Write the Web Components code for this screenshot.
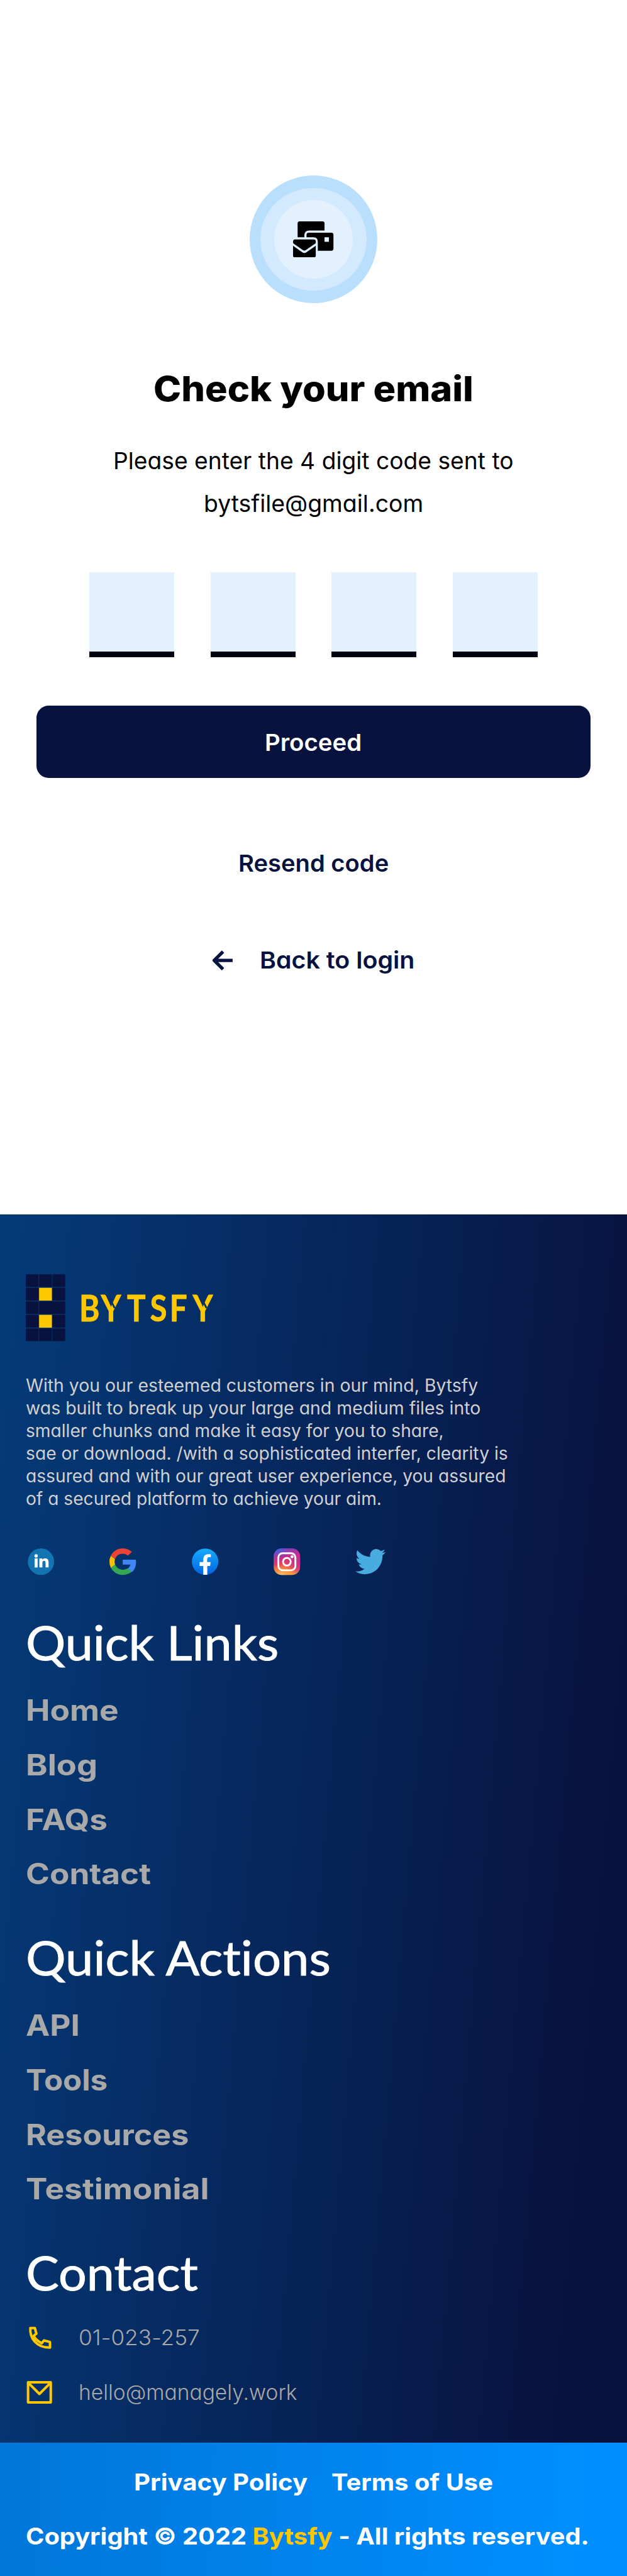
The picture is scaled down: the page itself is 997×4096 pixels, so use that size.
<!DOCTYPE html>
<html lang="en">
<head>
<meta charset="utf-8">
<title>Bytsfy – Check your email</title>
<style>
/* 1rem equals one hundred design pixels */
html{font-size:80.274px}
body{margin:0;background:#fff;font-family:Inter,"Liberation Sans",sans-serif;overflow-x:hidden}
</style>
</head>
<body>
<bytsfy-page></bytsfy-page>
<script>
function define(name, html, setup){
  const t=document.createElement('template'); t.innerHTML=html;
  customElements.define(name, class extends HTMLElement{
    constructor(){super();this.attachShadow({mode:'open'}).append(t.content.cloneNode(true));}
    connectedCallback(){ if(setup) setup.call(this,this.shadowRoot); }
  });
}

/* One line of text, widened so that it spans the width given in design pixels. */
define('fit-line', `<style>
:host{display:block;white-space:nowrap;font-variant-ligatures:none}
span{display:inline-block;transform-origin:0 50%}
</style><span><slot></slot></span>`, function(root){
  const s=root.querySelector('span'), want=+this.getAttribute('w')*.80274;
  const nat=s.getBoundingClientRect().width;
  s.style.transform='scaleX('+(want/nat)+')';
  this.style.width=want+'px';
});

define('mail-badge', `<style>
:host{display:grid;place-items:center;width:2.52rem;height:2.52rem;border-radius:50%;background:#badffd}
.mid{display:grid;place-items:center;width:2.1rem;height:2.04rem;border-radius:50%;background:#d2e9fe}
.in{display:grid;place-items:center;width:1.56rem;height:1.56rem;border-radius:50%;background:#e3f1ff}
svg{width:.8rem;height:.72rem}
</style><div class="mid"><div class="in"><svg viewBox="423 354 240 216">
<path d="M450 448V366q0-12 12-12H598q12 0 12 12V408H520q-30 0-30 30V448Z"/>
<path fill-rule="evenodd" d="M503 448V434q0-13 13-13H650q13 0 13 13V516q0 13-13 13H570V475q0-27-26-27ZM610 448V475H636V448Z"/>
<path d="M436 461H545q13 0 13 13V480q0 4-4 7L498 525q-8 6-16 0L427 487q-4-3-4-7V474q0-13 13-13Z"/>
<path d="M423 499L477 537q13 9 26 0L558 499V556q0 14-14 14H436q-13 0-13-13Z"/>
</svg></div></div>`);

define('code-input', `<style>
:host{display:flex;gap:.72rem}
i{width:1.68rem;height:1.56rem;background:#e3f1ff;border-bottom:.12rem solid #00020f}
</style><i></i><i></i><i></i><i></i>`);

define('primary-button', `<style>
:host{display:block;width:10.98rem}
button{all:unset;display:flex;justify-content:center;align-items:center;box-sizing:border-box;width:100%;height:1.44rem;padding-top:.03rem;border-radius:.24rem;background:#08123f;color:#fff;font-size:.465rem;font-weight:600}
</style><button><slot></slot></button>`);

define('verify-panel', `<style>
:host{display:flex;flex-direction:column;align-items:center;box-sizing:border-box;height:24.06rem;padding-top:3.48rem;color:#000;font-feature-settings:"cv11"}
h1{margin:1.26rem 0 0;font:800 .69rem/.88rem Inter,sans-serif;font-feature-settings:normal}
.p{margin-top:.57rem;font-size:.465rem;line-height:.84rem;display:flex;flex-direction:column;align-items:center}
code-input{margin:.95rem 0 .96rem}
.a{color:#08123f;font-weight:600;font-size:.465rem;line-height:.6rem;margin-top:1.39rem}
.b{margin-top:1.32rem;display:flex;align-items:center;gap:.53rem}
svg{width:.42rem;height:.4rem}
</style>
<mail-badge></mail-badge>
<h1><fit-line w="634">Check your email</fit-line></h1>
<div class="p"><fit-line w="793">Please enter the 4 digit code sent to</fit-line><fit-line w="435">bytsfile@gmail.com</fit-line></div>
<code-input></code-input>
<primary-button><fit-line w="192">Proceed</fit-line></primary-button>
<div class="a"><fit-line w="298">Resend code</fit-line></div>
<div class="a b"><svg viewBox="0 0 42 40" fill="none" stroke="#08123f" stroke-width="6.6" stroke-linejoin="round"><path d="M22 2.5L4.5 20L22 37.5M5 20H41"/></svg><fit-line w="307">Back to login</fit-line></div>`);

define('brand-logo', `<style>
:host{display:flex}
svg{width:3.75rem;height:1.33rem;overflow:visible}
text{font-family:Lato,sans-serif;font-weight:700;font-size:70.5px;fill:#ffc700;stroke:#ffc700;stroke-width:1}
</style><svg viewBox="51 2524 375 133">
<g fill="#08123f" id="g"></g>
<g fill="#ffc700"><rect x="77.4" y="2551" width="25.3" height="25.4"/><rect x="77.4" y="2604.6" width="25.3" height="25.4"/></g>
<text y="2617.3" transform="scale(.87 1)" x="180.5 229.9 289.1 341.4 386.2 439">BYTSFY</text>
<g stroke="#07306a" stroke-width="3.6"><path d="M217.500 2572L227 2591"/><path d="M399.500 2572L409 2591"/></g>
</svg>`, function(root){
  let h='';
  for(let r=0;r<5;r++)for(let c=0;c<3;c++){
    if(c===1&&(r===1||r===3)) continue;
    if(r===2&&c===2) continue;
    const w=(r===2&&c===1)?51.8:25.2;
    h+=`<rect x="${51+c*26.4}" y="${(2524.2+r*26.8).toFixed(1)}" width="${w}" height="25.3" rx="1"/>`;
  }
  root.getElementById('g').innerHTML=h;
});

define('social-row', `<style>
:host{display:flex;align-items:center;height:.53rem;margin-left:.037rem}
svg{width:.527rem;height:.527rem;margin-right:1.098rem;overflow:visible}
svg.tw{width:.6rem;height:.5rem;margin-left:-.01rem}
</style>
<svg viewBox="0 0 157 159"><ellipse cx="78.5" cy="79.5" rx="78.5" ry="79.5" fill="#1275b1"/><g fill="#fff"><circle cx="49.5" cy="45" r="10"/><rect x="40.500" y="60" width="18" height="54"/><path d="M69 60h17v8q6-9 18-9 20 0 20 25v30h-18V87q0-13-9-13-10 0-10 13v27H69Z"/></g></svg>
<svg viewBox="1 1 22 22"><path fill="#4285f4" d="M23 12.25c0-.5 0-.75-.12-1.95H12v4.1h6.3c-.15.95-.8 2.45-2.35 3.5l3.6 2.8C21.800 18.700 23 15.900 23 12.250z"/><path fill="#34a853" d="M12 23c3.100 0 5.600-1 7.500-2.700l-3.600-2.800c-1 .7-2.250 1.150-3.900 1.150-3 0-5.600-2-6.500-4.750L2 16.600C3.800 20.400 7.600 23 12 23z"/><path fill="#fbbc05" d="M5.600 14.200a6.700 6.700 0 010-4.350L2.200 7.050a11 11 0 000 9.900z"/><path fill="#eb4335" d="M12 5.400c2 0 3.400.8 4.300 1.600l3.250-3.100C17.600 2.100 15 1 12 1 7.700 1 4 3.400 2.200 7.050l3.500 2.750C6.500 7.200 9 5.400 12 5.400z"/></svg>
<svg viewBox="0 0 158 159"><defs><linearGradient id="f" x2="0" y2="1"><stop stop-color="#18acfe"/><stop offset="1" stop-color="#0163e0"/></linearGradient></defs><circle cx="79" cy="79.500" r="79" fill="url(#f)"/><path fill="#fff" d="M68 158V105H46V82H68V66q0-31 31-31H113V53H103q-12 0-12 13V82H112L109 105H92V158Z"/></svg>
<svg viewBox="0 0 158 159"><defs><linearGradient id="i" x1=".35" y1="0" x2=".5" y2="1"><stop stop-color="#7a3fc4"/><stop offset=".3" stop-color="#c22f92"/><stop offset=".58" stop-color="#e2415f"/><stop offset=".85" stop-color="#fb8133"/><stop offset="1" stop-color="#fda33a"/></linearGradient><radialGradient id="j" cx=".3" cy="1.05" r=".5"><stop stop-color="#e8dba0"/><stop offset=".25" stop-color="#f5b060" stop-opacity=".9"/><stop offset="1" stop-color="#ff8a2a" stop-opacity="0"/></radialGradient><radialGradient id="k" cx="1.05" cy=".5" r=".6"><stop stop-color="#c42d97"/><stop offset=".5" stop-color="#c42d97" stop-opacity=".7"/><stop offset="1" stop-color="#c42d97" stop-opacity="0"/></radialGradient><radialGradient id="l" cx=".15" cy="0" r=".45"><stop stop-color="#3a6bdf"/><stop offset="1" stop-color="#6b45c8" stop-opacity="0"/></radialGradient></defs><rect width="158" height="159" rx="48" fill="url(#i)"/><rect width="158" height="159" rx="48" fill="url(#k)"/><rect width="158" height="159" rx="48" fill="url(#j)"/><rect width="158" height="159" rx="48" fill="url(#l)"/><g fill="none" stroke="#fff" stroke-width="11"><rect x="28" y="29" width="102" height="102" rx="26"/><circle cx="79" cy="80" r="23"/></g><circle cx="110" cy="50" r="9" fill="#fff"/></svg>
<svg class="tw" viewBox="0 2.250 24 19.500" preserveAspectRatio="none"><path fill="#48ace0" d="M23.953 4.570a10 10 0 01-2.825.775 4.958 4.958 0 002.163-2.723c-.951.555-2.005.959-3.127 1.184a4.920 4.920 0 00-8.384 4.482C7.690 8.095 4.067 6.130 1.640 3.162a4.822 4.822 0 00-.666 2.475c0 1.710.870 3.213 2.188 4.096a4.904 4.904 0 01-2.228-.616v.060a4.923 4.923 0 003.946 4.827 4.996 4.996 0 01-2.212.085 4.936 4.936 0 004.604 3.417 9.867 9.867 0 01-6.102 2.105c-.390 0-.779-.023-1.170-.067a13.995 13.995 0 007.557 2.209c9.053 0 13.998-7.496 13.998-13.985 0-.210 0-.420-.015-.630A9.935 9.935 0 0024 4.590z"/></svg>`);

define('footer-group', `<style>
:host{display:block}
.h{font:400 .95rem/1.2rem Lato,sans-serif;color:#fff;-webkit-text-stroke:.012rem #fff;margin-bottom:var(--gap,.21rem)}
.l{font-weight:700;font-size:.575rem;line-height:1.08rem;color:#a9a9a9}
</style><div class="h"><slot name="title"></slot></div><div class="l"><slot></slot></div>`);

define('contact-row', `<style>
:host{display:flex;align-items:center;gap:.53rem;height:1.08rem;font-weight:300;font-size:.415rem;line-height:1.08rem;color:#a9a9a9;font-feature-settings:"cv11"}
::slotted(svg){width:.52rem;height:.5rem;flex:none}
</style><slot name="icon"></slot><slot></slot>`);

define('site-footer', `<style>
:host{display:block;box-sizing:border-box;height:24.32rem;padding:1.18rem 0 0 .51rem;background:linear-gradient(95deg,#053b78,#08123f 91%)}
.about{margin:.646rem 0 .754rem;font-size:.348rem;line-height:.45rem;color:#d0d0d0;font-feature-settings:"cv11"}
footer-group{margin-top:.51rem}
social-row+footer-group{margin-top:.73rem}
.c{--gap:.16rem}
</style>
<brand-logo></brand-logo>
<div class="about"><fit-line w="896">With you our esteemed customers in our mind, Bytsfy</fit-line><fit-line w="901">was built to break up your large and medium files into</fit-line><fit-line w="828">smaller chunks and make it easy for you to share,</fit-line><fit-line w="955">sae or download. /with a sophisticated interfer, clearity is</fit-line><fit-line w="951">assured and with our great user experience, you assured</fit-line><fit-line w="705">of a secured platform to achieve your aim.</fit-line></div>
<social-row></social-row>
<footer-group><fit-line slot="title" w="501">Quick Links</fit-line><fit-line w="184">Home</fit-line><fit-line w="142">Blog</fit-line><fit-line w="162">FAQs</fit-line><fit-line w="248">Contact</fit-line></footer-group>
<footer-group><fit-line slot="title" w="604">Quick Actions</fit-line><fit-line w="107">API</fit-line><fit-line w="162">Tools</fit-line><fit-line w="323">Resources</fit-line><fit-line w="363">Testimonial</fit-line></footer-group>
<footer-group class="c"><fit-line slot="title" w="341">Contact</fit-line>
<contact-row><svg slot="icon" viewBox="-5 -2 52 50" fill="none" stroke="#ffc700" stroke-width="5" stroke-linejoin="round"><path d="M4 4H13L16 15L10.500 19.500Q15 28 26.500 34L31 28.500L43 31.500V42.500Q24 43 13 31Q3 20 4 4Z"/></svg><fit-line w="240">01-023-257</fit-line></contact-row>
<contact-row><svg slot="icon" viewBox="-5 -2 52 50" fill="none" stroke="#ffc700" stroke-width="5" stroke-linejoin="round"><path d="M2.500 3.500H47.500V43.500H2.500ZM3 4.500L25 26.500L47 4.500" transform="translate(-3 -.5)"/></svg><fit-line w="433">hello@managely.work</fit-line></contact-row>
</footer-group>`);

define('legal-bar', `<style>
:host{display:block;box-sizing:border-box;height:2.65rem;padding-top:.25rem;background:linear-gradient(93deg,#0076d9,#008fff 95%);color:#fff;font-weight:700;font-size:.46rem;line-height:1.08rem}
.r{display:flex;justify-content:center;gap:.48rem}
.c{display:flex;padding-left:.51rem}
b{color:#ffc700;font-weight:inherit}
</style><div class="r"><fit-line w="344">Privacy Policy</fit-line><fit-line w="320">Terms of Use</fit-line></div>
<div class="c"><fit-line w="1116">Copyright © 2022 <b>Bytsfy</b> - All rights reserved.</fit-line></div>`);

define('bytsfy-page', `<style>:host{display:block;height:51.03rem;overflow:hidden}</style>
<verify-panel></verify-panel><site-footer></site-footer><legal-bar></legal-bar>`);
</script>
</body>
</html>
